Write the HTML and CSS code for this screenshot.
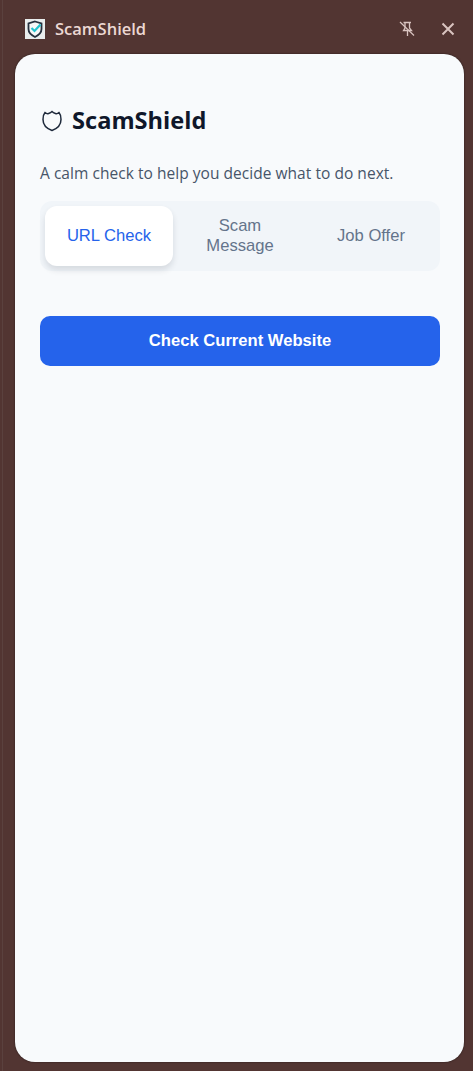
FILE: index.html
```html
<!DOCTYPE html>
<html>
<head>
    <title>ScamShield</title>
    <link rel="stylesheet" href="styles.css">
</head>
<body>
    <div class="window">
        <div class="titlebar">
            <div class="app-icon">
                <svg width="20" height="20" viewBox="0 0 20 20">
                    <path d="M10 2.500 L16.500 4.500 V10 C16.500 13.500 14 16 10 18 C6 16 3.500 13.500 3.500 10 V4.500 Z" fill="#f6f8f8" stroke="#26323f" stroke-width="1.800"/>
                    <path d="M6.500 9 L9.500 12 L15.500 5.500" fill="none" stroke="#22c4cf" stroke-width="2.200"/>
                </svg>
            </div>
            <span class="app-name">ScamShield</span>
            <div class="window-buttons">
                <svg class="pin" width="16" height="16" viewBox="0 0 16 16">
                    <path d="M4.500 1.500 H12 M6 1.500 V7 L4.500 9.500 H12.500 L10.500 7 V1.500 M8.500 9.500 V15" fill="none" stroke="#d9c4c0" stroke-width="1.300"/>
                    <path d="M1 1 L15 14.500" fill="none" stroke="#d9c4c0" stroke-width="1.200"/>
                </svg>
                <svg class="close" width="14" height="14" viewBox="0 0 14 14">
                    <path d="M1.500 1.500 L12.500 12.500 M12.500 1.500 L1.500 12.500" fill="none" stroke="#d9c4c0" stroke-width="2"/>
                </svg>
            </div>
        </div>

        <div class="card">
            <div class="header">
                <svg class="header-icon" width="24" height="24" viewBox="0 0 24 24">
                    <path d="M5 3.500 C6.500 4.800 7.500 4.800 8.500 4.500 C9.800 4 11 3.500 12 2.500 C13 3.500 14.200 4 15.500 4.500 C16.500 4.800 17.500 4.800 19 3.500 C20.800 5.500 21 8 21 10.500 C21 15.500 17.500 19.500 12 21.500 C6.500 19.500 3 15.500 3 10.500 C3 8 3.200 5.500 5 3.500 Z" fill="none" stroke="#1e293b" stroke-width="1.500"/>
                </svg>
                <h1>ScamShield</h1>
            </div>
            <p class="tagline">A calm check to help you decide what to do next.</p>

            <div class="tabs">
                <button class="tab active">URL Check</button>
                <button class="tab">Scam Message</button>
                <button class="tab">Job Offer</button>
            </div>

            <button class="check-button">Check Current Website</button>
        </div>
    </div>
</body>
</html>
```

FILE: styles.css
```css
html, body {
    height: 100%;
}
body {
    margin: 0;
    background-color: #523532;
    font-family: "Open Sans", "Noto Sans", sans-serif;
}
.window {
    height: 1071px;
    margin-left: 2px;
    padding: 0 9px 9px 12px;
    box-sizing: border-box;
    display: flex;
    flex-direction: column;
    border-left: 1px solid #5a413e;
    overflow: hidden;
}
.titlebar {
    height: 54px;
    flex-shrink: 0;
    display: flex;
    align-items: center;
    padding: 3px 9px 0 10px;
    box-sizing: border-box;
}
.app-icon {
    width: 20px;
    height: 20px;
    background-color: #e9eded;
}
.app-name {
    margin-left: 10px;
    font-size: 16.500px;
    font-weight: 600;
    color: #ecd8d3;
}
.window-buttons {
    margin-left: auto;
    display: flex;
    align-items: center;
    gap: 26px;
}
.card {
    flex: 1;
    background-color: #f8fafc;
    border-radius: 20px;
    padding: 48px 24px 0 25px;
    box-shadow: 0 0 2px rgba(0, 0, 0, 0.6);
}
.header {
    display: flex;
    align-items: center;
    gap: 8px;
    height: 36px;
}
.header-icon {
    padding-top: 2px;
}
.header h1 {
    margin: 0;
    font-size: 23.600px;
    font-weight: 700;
    color: #0f172a;
}
.tagline {
    margin: 0;
    padding-top: 25px;
    font-size: 15.500px;
    letter-spacing: 0.040px;
    line-height: 20px;
    color: #475569;
}
.tabs {
    margin-top: 18px;
    display: flex;
    gap: 3px;
    padding: 5px;
    height: 70px;
    box-sizing: border-box;
    background-color: #f1f5f9;
    border-radius: 12px;
}
.tab {
    flex: 1;
    border: none;
    background: none;
    border-radius: 12px;
    padding: 0 20px;
    font-family: "Liberation Sans", Arial, sans-serif;
    font-size: 16.600px;
    line-height: 20px;
    color: #64748b;
}
.tab.active {
    background-color: #ffffff;
    color: #2563eb;
    box-shadow: 0 4px 6px rgba(15, 23, 42, 0.12);
}
.check-button {
    display: block;
    width: 100%;
    height: 50px;
    margin-top: 45px;
    border: none;
    border-radius: 10px;
    background-color: #2563eb;
    color: white;
    font-family: "Liberation Sans", Arial, sans-serif;
    font-size: 16.600px;
    font-weight: 700;
}
```
